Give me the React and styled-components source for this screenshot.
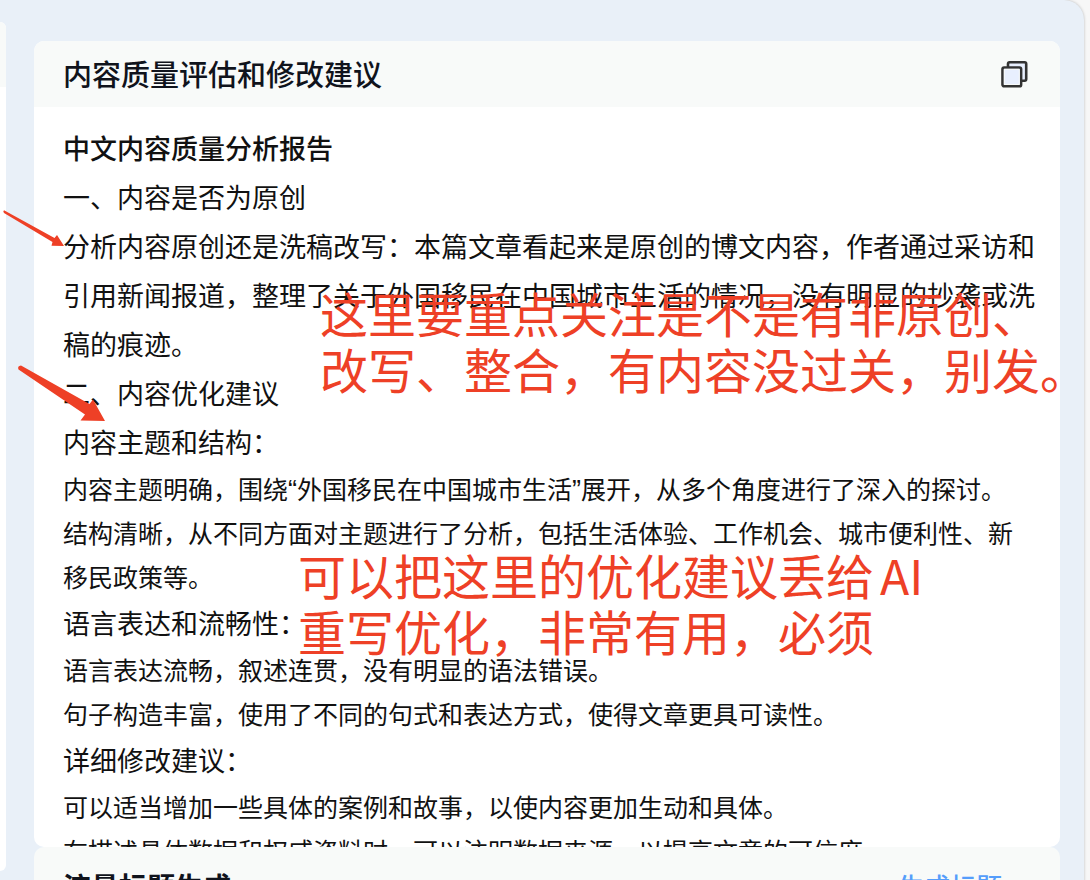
import React from "react";
import styled, { createGlobalStyle } from "styled-components";

const GlobalStyle = createGlobalStyle`
  * { box-sizing: border-box; }
  body {
    margin: 0;
    background: #f7f7f7;
    color: #111;
    font-family: "Noto Sans CJK SC", "Liberation Sans", sans-serif;
  }
  h2, h3, p { margin: 0; font-weight: 400; }
`;

const Page = styled.div`
  height: 100vh;
  overflow: hidden;
  padding-right: 6px;
`;

const Shell = styled.main`
  position: relative;
  display: flex;
  align-items: flex-start;
  gap: 28px;
  min-height: 100%;
  padding-right: 24px;
  background: #e9f0f8;
  border-top-right-radius: 20px;
  box-shadow: 0 0 3px rgba(0, 0, 0, 0.25);
`;

const SidePanel = styled.aside`
  flex: 0 0 6px;
  height: 849px;
  margin-top: 22px;
  border-radius: 0 8px 8px 0;
  background: #fff;
  overflow: hidden;
`;

const SideHeader = styled.div`
  height: 65px;
  background: #f8faf9;
`;

const Column = styled.div`
  flex: 1;
  min-width: 0;
  padding-top: 41px;
`;

const Card = styled.section`
  border-radius: 10px;
  background: #fff;
  overflow: hidden;
`;

const CardHeader = styled.header`
  display: flex;
  align-items: center;
  justify-content: space-between;
  height: ${(p) => (p.$tall ? 80 : 66)}px;
  padding: 0 ${(p) => (p.$tall ? 58 : 30)}px 0 29px;
  background: #f8faf9;
`;

const CardTitle = styled.h2`
  padding-bottom: 3px;
  font-size: ${(p) => (p.$strong ? 28 : 29)}px;
  line-height: 40px;
  font-weight: ${(p) => (p.$strong ? 700 : 500)};
  color: #10131c;
`;

const IconButton = styled.button`
  display: flex;
  padding: 0;
  border: 0;
  background: none;
`;

const TextButton = styled.button`
  padding: 0 0 3px;
  border: 0;
  background: none;
  font: 500 26px/36px "Noto Sans CJK SC", sans-serif;
  color: #559dfb;
`;

const Report = styled.div`
  height: 740px;
  padding: 16px 29px 0;
  overflow: hidden;
`;

const ReportTitle = styled.h3`
  font-size: 27px;
  line-height: 49px;
  font-weight: 500;
  color: #111;
`;

const Line = styled.p`
  font-size: 27px;
  line-height: 49px;
  white-space: nowrap;
`;

const Detail = styled.p`
  font-size: 25px;
  line-height: 44px;
  white-space: nowrap;
`;

const Quote = styled.span`
  font-family: "Liberation Sans", sans-serif;
  font-size: 27px;
  line-height: 1;
`;

const Note = styled.p`
  position: absolute;
  left: ${(p) => p.$x}px;
  top: ${(p) => p.$y}px;
  font-size: 48px;
  line-height: 56px;
  font-weight: 400;
  text-autospace: normal;
  white-space: nowrap;
  color: #ee4026;
`;

const Arrows = styled.svg`
  position: absolute;
  left: 0;
  top: 200px;
  pointer-events: none;
`;

const CopyIcon = () => (
  <svg width="30" height="30" viewBox="0 0 30 30" fill="#e8effe" stroke="#333" strokeWidth="2.6" strokeLinejoin="round" aria-hidden="true">
    <rect x="8" y="3.3" width="18.2" height="18.4" rx="1.6" />
    <rect x="2.5" y="8.5" width="18.6" height="18.8" rx="1.6" />
    <rect x="4.3" y="10.3" width="15" height="15.2" fill="none" stroke="#f8faf9" strokeWidth="1" />
  </svg>
);

export default function App() {
  return (
    <Page>
      <GlobalStyle />
      <Shell>
        <SidePanel>
          <SideHeader />
        </SidePanel>
        <Column>
          <Card>
            <CardHeader>
              <CardTitle>内容质量评估和修改建议</CardTitle>
              <IconButton type="button" aria-label="复制">
                <CopyIcon />
              </IconButton>
            </CardHeader>
            <Report>
              <ReportTitle>中文内容质量分析报告</ReportTitle>
              <Line>一、内容是否为原创</Line>
              <Line>
                分析内容原创还是洗稿改写：本篇文章看起来是原创的博文内容，作者通过采访和
                <br />
                引用新闻报道，整理了关于外国移民在中国城市生活的情况，没有明显的抄袭或洗
                <br />
                稿的痕迹。
              </Line>
              <Line>二、内容优化建议</Line>
              <Line>内容主题和结构：</Line>
              <Detail>
                内容主题明确，围绕<Quote>“</Quote>外国移民在中国城市生活<Quote>”</Quote>展开，从多个角度进行了深入的探讨。
              </Detail>
              <Detail>
                结构清晰，从不同方面对主题进行了分析，包括生活体验、工作机会、城市便利性、新
                <br />
                移民政策等。
              </Detail>
              <Line>语言表达和流畅性：</Line>
              <Detail>语言表达流畅，叙述连贯，没有明显的语法错误。</Detail>
              <Detail>句子构造丰富，使用了不同的句式和表达方式，使得文章更具可读性。</Detail>
              <Line>详细修改建议：</Line>
              <Detail>可以适当增加一些具体的案例和故事，以使内容更加生动和具体。</Detail>
              <Detail>在描述具体数据和权威资料时，可以注明数据来源，以提高文章的可信度。</Detail>
            </Report>
          </Card>
          <Card>
            <CardHeader $tall>
              <CardTitle $strong>流量标题生成</CardTitle>
              <TextButton type="button">生成标题</TextButton>
            </CardHeader>
          </Card>
        </Column>
        <Note $x={320} $y={284}>
          这里要重点关注是不是有非原创、
          <br />
          改写、整合，有内容没过关，别发。
        </Note>
        <Note $x={298} $y={546}>
          可以把这里的优化建议丢给AI
          <br />
          重写优化，非常有用，必须
        </Note>
        <Arrows width="120" height="230" viewBox="0 200 120 230" fill="#ee4026" aria-hidden="true">
          <path d="M4 210.2 Q2.6 211.2 4 213 L52.5 242 L51.5 245.7 L64 246 L57 235 L54.5 238 Z" />
          <path d="M21 365.5 Q17 366 18.5 369.5 L85 414.5 L80.5 420.5 L105 421 L93 399.5 L89.5 404 Z" />
        </Arrows>
      </Shell>
    </Page>
  );
}
